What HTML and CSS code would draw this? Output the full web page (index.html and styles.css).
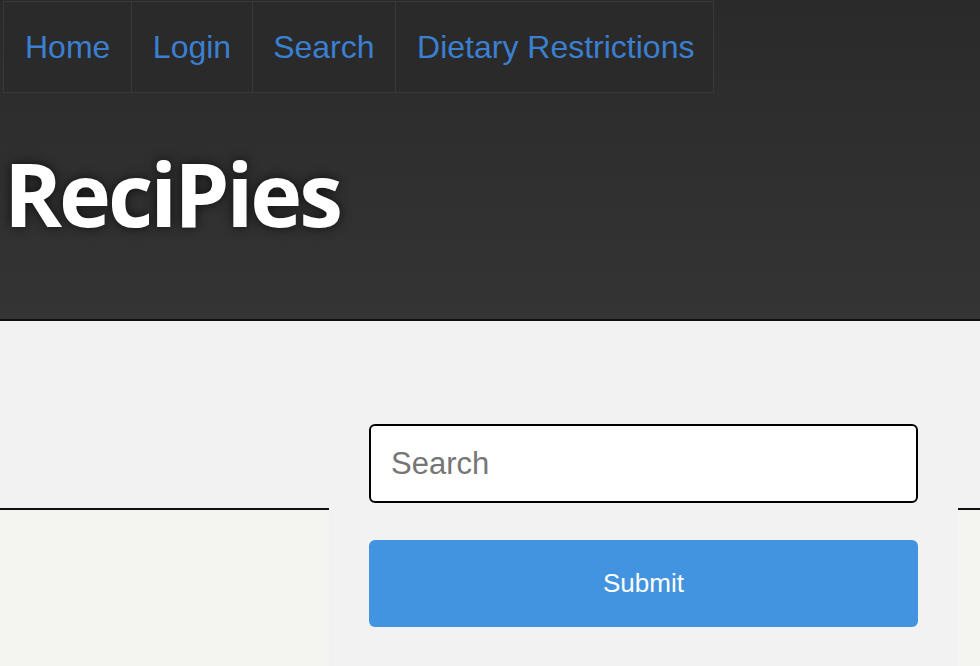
FILE: index.html
```html
<!DOCTYPE html>
<html>
<head>
<meta charset="utf-8">
<link rel="stylesheet" href="styles.css">
</head>
<body>
<header class="site-header">
  <nav class="nav">
    <a class="nav-link" href="#">Home</a>
    <a class="nav-link" href="#">Login</a>
    <a class="nav-link" href="#">Search</a>
    <a class="nav-link" href="#">Dietary Restrictions</a>
  </nav>
  <h1 class="title">ReciPies</h1>
</header>
<main class="main">
  <div class="band"></div>
  <div class="lower"></div>
  <form class="search-panel">
    <input class="search-input" type="text" placeholder="Search">
    <button class="submit-btn" type="button">Submit</button>
  </form>
</main>
</body>
</html>
```
FILE: styles.css
```css
html, body {
  margin: 0;
  padding: 0;
  height: 100%;
  overflow: hidden;
}
body {
  font-family: "Liberation Sans", Arial, sans-serif;
  background: #f4f5f0;
}
.site-header {
  height: 321px;
  box-sizing: border-box;
  padding: 1px 0 0 3px;
  background: linear-gradient(to bottom, #2a2a2a 0%, #343434 100%);
  border-bottom: 2px solid #111;
}
.nav {
  display: inline-flex;
  background: #2a2a2a;
  border: 1px solid #383838;
}
.nav-link {
  display: block;
  padding: 27px 21px 26px 21px;
  font-size: 32px;
  line-height: 37px;
  color: #3b7fd0;
  text-decoration: none;
  border-right: 1px solid #3a3a3a;
}
.nav-link:nth-child(2),
.nav-link:nth-child(3) {
  padding-left: 20.5px;
  padding-right: 20.5px;
}
.nav-link:last-child {
  border-right: none;
  padding-left: 21px;
  padding-right: 19px;
}
.title {
  margin: 40px 0 0 1px;
  font-family: "Open Sans", sans-serif;
  font-weight: 700;
  font-size: 88px;
  line-height: 120px;
  letter-spacing: -3px;
  color: #fff;
  text-shadow: 0 0 12px rgba(0,0,0,0.7);
}
.main {
  display: grid;
  grid-template-columns: 329px 629px 1fr;
  grid-template-rows: 63px 126px 1fr;
  height: 345px;
}
.band {
  grid-column: 1 / 4;
  grid-row: 1 / 3;
  background: #f2f2f2;
  border-bottom: 2px solid #111;
}
.lower {
  grid-column: 1 / 4;
  grid-row: 3;
  background: #f4f5f0;
}
.search-panel {
  grid-column: 2;
  grid-row: 2 / 4;
  margin: 0;
  background: #f2f2f2;
  padding: 40px 40px 0 40px;
  display: flex;
  flex-direction: column;
  gap: 37px;
}
.search-input {
  box-sizing: border-box;
  height: 79px;
  width: 549px;
  border: 2px solid #000;
  border-radius: 6px;
  padding: 0 20px;
  font-family: "Liberation Sans", Arial, sans-serif;
  font-size: 31px;
  background: #fff;
  outline: none;
}
.search-input::placeholder {
  color: #767676;
}
.submit-btn {
  height: 87px;
  width: 549px;
  border: none;
  border-radius: 6px;
  background: #4394e0;
  color: #fff;
  font-family: "Liberation Sans", Arial, sans-serif;
  font-size: 26px;
}
```
